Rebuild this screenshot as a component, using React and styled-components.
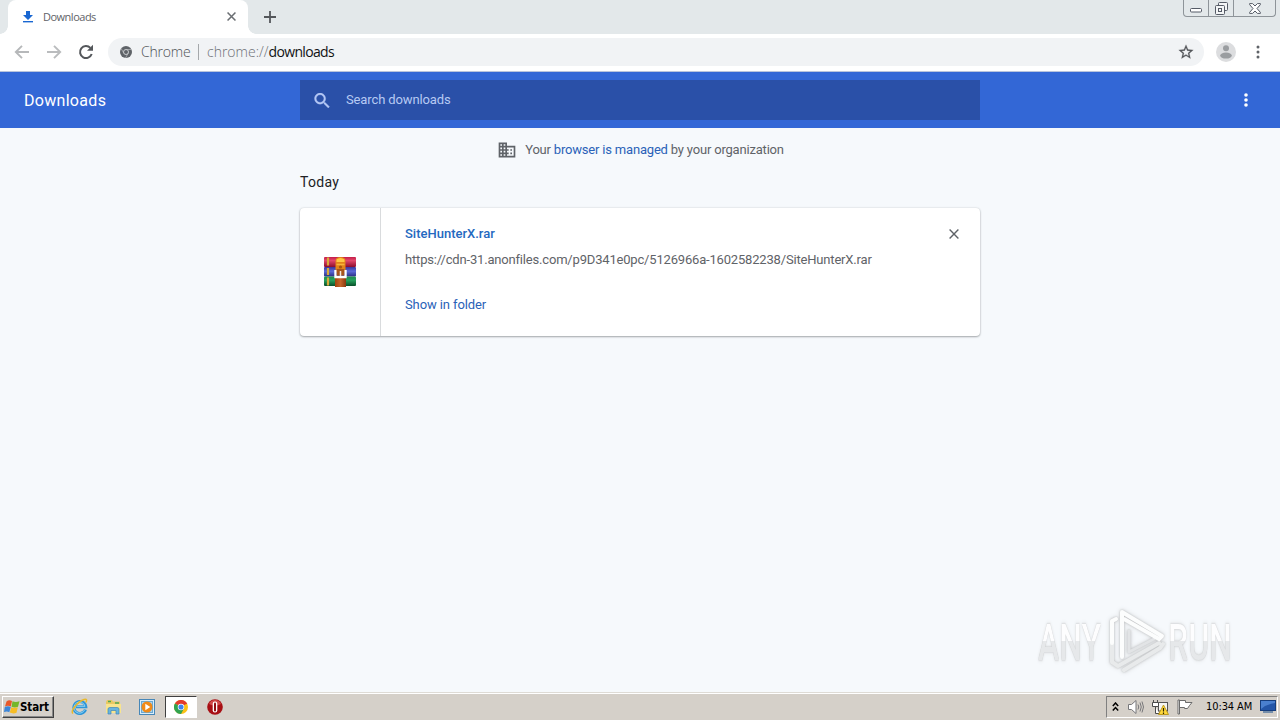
import React from 'react'
import styled, { createGlobalStyle } from 'styled-components'

const trayIcons = [ChevronsIcon, SpeakerIcon, NetworkIcon, FlagIcon]

export default function App() {
    return (
        <Screen>
            <GlobalStyle />
            <TabStrip>
                <Tab>
                    <DownloadIcon />
                    <TabTitle>Downloads</TabTitle>
                    <CrossIcon size={9} width={1.7} color="#6a6e72" />
                </Tab>
                <NewTab><PlusIcon /></NewTab>
                <WindowButtons>
                    <WindowButton $width={24}><MinimizeIcon /></WindowButton>
                    <WindowButton $width={25}><RestoreIcon /></WindowButton>
                    <WindowButton $width={42}><CloseIcon /></WindowButton>
                </WindowButtons>
            </TabStrip>
            <Toolbar>
                <NavButtons>
                    <ArrowIcon />
                    <ArrowIcon forward />
                    <ReloadIcon />
                </NavButtons>
                <AddressBar>
                    <ChromeMark />
                    <SiteName>Chrome</SiteName>
                    <Separator />
                    <Url>chrome://<b>downloads</b></Url>
                    <StarIcon />
                </AddressBar>
                <Avatar />
                <DotsIcon color="#5f6368" radius={1.5} gap={5} />
            </Toolbar>
            <Header>
                <HeaderTitle>Downloads</HeaderTitle>
                <SearchBox>
                    <SearchIcon />
                    <SearchText>Search downloads</SearchText>
                </SearchBox>
                <HeaderMenu><DotsIcon color="#fff" radius={1.8} gap={5} /></HeaderMenu>
            </Header>
            <Content>
                <ManagedNotice>
                    <BuildingIcon />
                    <ManagedText>Your <a>browser is managed</a> by your organization</ManagedText>
                </ManagedNotice>
                <DateHeading>Today</DateHeading>
                <Card>
                    <FileIcon><RarIcon /></FileIcon>
                    <Details>
                        <FileName>SiteHunterX.rar</FileName>
                        <FileUrl>https://cdn-31.anonfiles.com/p9D341e0pc/5126966a-1602582238/SiteHunterX.rar</FileUrl>
                        <ShowLink>Show in folder</ShowLink>
                    </Details>
                    <RemoveButton><CrossIcon size={10} width={1.4} color="#5f6368" /></RemoveButton>
                </Card>
                <Watermark>
                    <WatermarkWord>ANY</WatermarkWord>
                    <PlayMark />
                    <WatermarkWord>RUN</WatermarkWord>
                </Watermark>
            </Content>
            <Taskbar>
                <StartButton><WindowsFlag />Start</StartButton>
                <TaskItem $left={9}><ExplorerIcon /></TaskItem>
                <TaskItem><FolderIcon /></TaskItem>
                <TaskItem><PlayerIcon /></TaskItem>
                <TaskItem $active><ChromeIcon /></TaskItem>
                <TaskItem><OperaIcon /></TaskItem>
                <Tray>
                    {trayIcons.map((Icon, i) => <Icon key={i} />)}
                    <Clock>10:34 AM</Clock>
                    <DesktopIcon />
                </Tray>
            </Taskbar>
        </Screen>
    )
}

// browser icons

function DownloadIcon() {
    return (
        <svg width="12" height="13" viewBox="0 0 12 13" fill="#1967d2">
            <path d="M4 1h4v4h3L6 10 1 5h3z" />
            <path d="M1 11h10v1.4H1z" />
        </svg>
    )
}

function CrossIcon({ size, width, color }) {
    return (
        <svg width={size} height={size} viewBox="0 0 10 10" stroke={color} strokeWidth={width}>
            <path d="M.6.6l8.8 8.8M9.4.6L.6 9.4" />
        </svg>
    )
}

function PlusIcon() {
    return (
        <svg width="12" height="12" viewBox="0 0 12 12" stroke="#54575b" strokeWidth="1.8">
            <path d="M6 0v12M0 6h12" />
        </svg>
    )
}

function MinimizeIcon() {
    return (
        <svg width="12" height="5" viewBox="0 0 12 5" fill="#fff" stroke="#555b66">
            <rect x=".5" y=".5" width="11" height="3.5" rx="1" />
        </svg>
    )
}

function RestoreIcon() {
    return (
        <svg width="13" height="13" viewBox="0 0 13 13" fill="#f3f5f6" stroke="#555b66">
            <rect x="3.5" y=".5" width="9" height="8" rx="1" />
            <rect x=".5" y="3.5" width="9" height="9" rx="1" />
            <rect x="3.5" y="6.5" width="3" height="3" />
        </svg>
    )
}

function CloseIcon() {
    return (
        <svg width="12" height="11" viewBox="0 0 12 11" fill="#fff" stroke="#555b66" strokeLinejoin="round">
            <path d="M.6.6h3L6 3l2.4-2.4h3v1L8 5.5l3.4 3.9v1h-3L6 8l-2.4 2.4h-3v-1L4 5.5.6 1.6z" />
        </svg>
    )
}

function ArrowIcon({ forward }) {
    return (
        <svg width="16" height="14" viewBox="0 0 16 14" fill="none" stroke={forward ? '#babcbe' : '#b6b8ba'} strokeWidth="1.9">
            <path d={forward ? 'M1 7h13M8 .8L14.2 7 8 13.2' : 'M15 7H2M8 .8L1.8 7 8 13.2'} />
        </svg>
    )
}

function ReloadIcon() {
    return (
        <svg width="16" height="16" viewBox="0 0 16 16">
            <path d="M13.7 10A6 6 0 1 1 12.4 3.9" fill="none" stroke="#54575b" strokeWidth="2" />
            <path d="M15 .8v6H9z" fill="#54575b" />
        </svg>
    )
}

function ChromeMark() {
    return (
        <svg width="12" height="12" viewBox="0 0 24 24">
            <circle cx="12" cy="12" r="12" fill="#5f6368" />
            <circle cx="12" cy="12" r="5" fill="none" stroke="#d5d7d9" strokeWidth="1.8" />
            <path d="M12 7h11M7.7 14.5L2.2 5M16.3 14.5L11 24" stroke="#c3c5c8" strokeWidth="1.3" />
        </svg>
    )
}

function StarIcon() {
    return (
        <svg width="16" height="16" viewBox="1 1 22 22" fill="#54575b" stroke="#54575b" strokeWidth=".3">
            <path d="M22 9.24l-7.19-.62L12 2 9.19 8.63 2 9.24l5.46 4.73L5.82 21 12 17.27 18.18 21l-1.63-7.03L22 9.24zM12 15.4l-3.76 2.27 1-4.28-3.32-2.88 4.38-.38L12 6.1l1.71 4.04 4.38.38-3.32 2.88 1 4.28L12 15.4z" />
        </svg>
    )
}

function Avatar() {
    return (
        <svg width="20" height="20" viewBox="0 0 20 20">
            <circle cx="10" cy="10" r="10" fill="#dcdddf" />
            <circle cx="10" cy="6.3" r="3" fill="#9a9da0" />
            <ellipse cx="10" cy="13.6" rx="5.8" ry="3" fill="#9a9da0" />
        </svg>
    )
}

function DotsIcon({ color, radius, gap }) {
    return (
        <svg width="4" height="14" viewBox="0 0 4 14" fill={color}>
            {[7 - gap, 7, 7 + gap].map((y) => <circle key={y} cx="2" cy={y} r={radius} />)}
        </svg>
    )
}

function SearchIcon() {
    return (
        <svg width="16" height="15" viewBox="2.500 3 18.500 17.500" fill="#b4c8f5" stroke="#b4c8f5" strokeWidth=".4">
            <path d="M15.5 14h-.79l-.28-.27C15.41 12.59 16 11.11 16 9.5 16 5.91 13.09 3 9.5 3S3 5.91 3 9.5 5.91 16 9.5 16c1.61 0 3.09-.59 4.23-1.57l.27.28v.79l5 4.99L20.49 19l-4.99-5zm-6 0C7.01 14 5 11.99 5 9.5S7.01 5 9.5 5 14 7.01 14 9.5 11.99 14 9.5 14z" />
        </svg>
    )
}

function BuildingIcon() {
    return (
        <svg width="20" height="20" viewBox="0 0 24 24" fill="#5f6368">
            <path d="M12 7V3H2v18h20V7H12zM6 19H4v-2h2v2zm0-4H4v-2h2v2zm0-4H4V9h2v2zm0-4H4V5h2v2zm4 12H8v-2h2v2zm0-4H8v-2h2v2zm0-4H8V9h2v2zm0-4H8V5h2v2zm10 12h-8v-2h2v-2h-2v-2h2v-2h-2V9h8v10zm-2-8h-2v2h2v-2zm0 4h-2v2h2v-2z" />
        </svg>
    )
}

// three stacked books held by a belt
function RarIcon() {
    return (
        <svg width="32" height="31" viewBox="0 0 32 31">
            <defs>
                <linearGradient id="red" x2="0" y2="1">
                    <stop stopColor="#c41c48" /><stop offset=".35" stopColor="#e2486b" /><stop offset="1" stopColor="#8c0c2c" />
                </linearGradient>
                <linearGradient id="blue" x2="0" y2="1">
                    <stop stopColor="#39379a" /><stop offset=".45" stopColor="#5a6ad8" /><stop offset="1" stopColor="#2b2e83" />
                </linearGradient>
                <linearGradient id="green" x2="0" y2="1">
                    <stop stopColor="#1c8a4e" /><stop offset=".4" stopColor="#26a05c" /><stop offset="1" stopColor="#09502a" />
                </linearGradient>
                <linearGradient id="belt">
                    <stop stopColor="#a3430f" /><stop offset=".5" stopColor="#c5652a" /><stop offset="1" stopColor="#8a3a10" />
                </linearGradient>
            </defs>
            <rect x="0" y="1" width="32" height="10" rx="1" fill="url(#red)" />
            <rect x="0" y="11" width="32" height="9.5" rx="1" fill="url(#blue)" />
            <rect x="0" y="20.5" width="32" height="9.5" rx="1" fill="url(#green)" />
            <path d="M4 1.5v8M4 12v7M4 21.5v8" stroke="#d9a93a" strokeWidth="2.2" />
            <rect x="11" y="21" width="11" height="10" fill="url(#belt)" />
            <path d="M11.5 16V5q0-4 5-4t5 4v11z" fill="#e2841a" />
            <path d="M12.5 3.500q4-3 8 0V6h-8z" fill="#ffc843" />
            <path d="M12.5 8.500h8" stroke="#f7b53a" strokeWidth="1.500" />
            <circle cx="16.500" cy="11" r="1.600" fill="#a6560e" />
            <path d="M11.500 14v7h10v-7" fill="none" stroke="#fff" strokeWidth="2.400" />
            <path d="M12.700 13h7.600v6.500h-7.600z" fill="#a8551b" />
            <path d="M16.500 15v5" stroke="#f3e6da" strokeWidth="1.500" />
        </svg>
    )
}

function PlayMark() {
    return (
        <MarkSvg width="64" height="68" viewBox="0 0 64 68" fill="none" strokeLinejoin="round" strokeLinecap="round">
            <path d="M25 24v21M25 45l25-13" stroke="#e2e4e6" strokeWidth="3" />
            <path d="M8 34v21l6 4 41-23M20 63l36-22 3-4" stroke="#e8eaeb" strokeWidth="4" />
            <path d="M12 12l-4 2v22M18 50V5l40 24-3 3L20 12" stroke="#fcfdfd" strokeWidth="4" />
        </MarkSvg>
    )
}

// taskbar icons

function WindowsFlag() {
    return (
        <svg width="16" height="15" viewBox="0 0 16 15">
            <path d="M2.5 2.5Q5 .5 8 2L6.800 7.500Q4 6 1 7.500z" fill="#e8592b" />
            <path d="M8.500 2.200q3 1.500 7 0L14 7.800q-3 1.200-6.500 0z" fill="#74b72b" />
            <path d="M.8 8Q4 6.500 6.800 8L5.300 13.200Q3 11.700 0 13z" fill="#3d86d8" />
            <path d="M7.300 8.200q3 1.300 6.500 0L12.500 13.700q-3 1.400-6.700-.1z" fill="#f7bd25" />
        </svg>
    )
}

function ExplorerIcon() {
    return (
        <svg width="17" height="17" viewBox="0 0 17 17" fill="none">
            <path d="M14.5 11.5A6 6 0 1 1 14.8 8.8H5" stroke="#2f96d8" strokeWidth="3" />
            <path d="M13.8 11.5A5.6 5.6 0 1 1 14 8.3H5.5" stroke="#8ad2f5" />
            <path d="M2 15.5C-1 13 7 3.5 13 1.5c3-1 3 .8 1.800 3" stroke="#e9b92c" strokeWidth="1.5" />
        </svg>
    )
}

function FolderIcon() {
    return (
        <svg width="17" height="16" viewBox="0 0 17 16">
            <path d="M1 3l1-2h5l1 1.5h7V14H1z" fill="#e9c862" />
            <path d="M3 2.5h3M10 4h4" stroke="#4fa754" strokeWidth="1.3" />
            <path d="M1 5h15v9H1z" fill="#f8e48e" />
            <path d="M3 15V10q0-1.500 2-1.500h7q2 0 2 1.500v5h-3v-3.500H6V15z" fill="#68b4df" stroke="#4088b8" strokeWidth=".7" />
        </svg>
    )
}

function PlayerIcon() {
    return (
        <svg width="16" height="16" viewBox="0 0 16 16">
            <rect x=".5" y=".5" width="15" height="15" fill="#d9edfa" stroke="#4787b8" />
            <rect x="2.5" y="2.5" width="11" height="11" fill="#a8d2ee" stroke="#6aa8d2" />
            <circle cx="8" cy="8" r="5.5" fill="#f08a18" />
            <path d="M6.3 4.8v6.4L11.3 8z" fill="#fff" />
        </svg>
    )
}

function ChromeIcon() {
    return (
        <svg width="14" height="14" viewBox="0 0 24 24">
            <circle cx="12" cy="12" r="12" fill="#fbc116" />
            <path d="M12 12L1.6 6A12 12 0 0 1 22.4 6z" fill="#e33b2e" />
            <path d="M12 6.5h10.7L22.4 6 12 0z" fill="#e33b2e" />
            <path d="M1.6 6A12 12 0 0 0 12 24l4.8-9.2L12 12z" fill="#31a350" />
            <circle cx="12" cy="12" r="5.6" fill="#fff" />
            <circle cx="12" cy="12" r="4.4" fill="#3f83ee" />
        </svg>
    )
}

function OperaIcon() {
    return (
        <svg width="16" height="16" viewBox="0 0 16 16">
            <circle cx="8" cy="8" r="7.8" fill="#a80f14" />
            <path d="M2 5a6.5 6.5 0 0 1 12 0Q8 8 2 5z" fill="#d04a4a" />
            <rect x="5.700" y="2.500" width="4.600" height="11" rx="2.200" fill="#fff" />
            <rect x="7" y="3.500" width="2" height="9" rx="1" fill="#8f0c10" />
        </svg>
    )
}

function ChevronsIcon() {
    return (
        <svg width="7" height="9" viewBox="0 0 7 9" fill="none" stroke="#000" strokeWidth="1.5">
            <path d="M.8 4l2.7-3 2.7 3M.8 8.5l2.7-3 2.7 3" />
        </svg>
    )
}

function SpeakerIcon() {
    return (
        <svg width="17" height="16" viewBox="0 0 17 16" fill="none" stroke="#77777a">
            <path d="M1.5 5.5h3L9 1.5v13L4.5 10.5h-3z" fill="#fff" />
            <path d="M11 5.5q1.5 2.5 0 5M13 3.5q2.5 4.5 0 9M15 2.5q3 5.5 0 11" />
        </svg>
    )
}

function NetworkIcon() {
    return (
        <svg width="17" height="16" viewBox="0 0 17 16">
            <rect x="6.5" y="3.5" width="9" height="8.5" fill="#f5f5f2" stroke="#555" />
            <path d="M7 14.5h5" stroke="#555" />
            <path d="M.5 3.5h6v4h-6zM3.5 7.5v7H7M1.5 1v2.5M5.5 1v2.5" fill="#fff" stroke="#4c4c4c" />
            <path d="M11.500 6l5 9.500h-10z" fill="#ffd83b" stroke="#b18b08" strokeWidth=".8" />
            <path d="M11.500 9v3.500M11.500 13.500V15" stroke="#2b2200" strokeWidth="1.2" />
        </svg>
    )
}

function FlagIcon() {
    return (
        <svg width="16" height="16" viewBox="0 0 16 16" fill="#fff" stroke="#6b6b6b">
            <path d="M2.5 1.5h6v2h6.5l-2.500 3-2 3h-3v-1h-5z" />
            <path d="M1 1h1.5v14H1z" />
        </svg>
    )
}

function DesktopIcon() {
    return (
        <svg width="16" height="13" viewBox="0 0 16 13">
            <rect x=".5" y=".5" width="15" height="10" fill="#2456a8" stroke="#163e7d" />
            <path d="M1 1h14v2Q7 4 1 9z" fill="#4a80cf" />
            <path d="M3 12h10" stroke="#55799f" strokeWidth="1.5" />
        </svg>
    )
}

const GlobalStyle = createGlobalStyle`
    * {
        box-sizing: border-box;
    }
    body {
        margin: 0;
        overflow: hidden;
    }
    svg {
        display: block;
        flex-shrink: 0;
    }
`
const Screen = styled.div`
    width: 1280px;
    height: 720px;
    display: flex;
    flex-direction: column;
    background: #f6f9fc;
    font-family: Roboto, sans-serif;
    font-size: 13px;
    white-space: nowrap;
`
const TabStrip = styled.div`
    height: 34px;
    padding-left: 8px;
    display: flex;
    background: #e3e8ea;
`
const Tab = styled.div`
    width: 240px;
    padding: 0 12px 1px 14px;
    display: flex;
    align-items: center;
    background: #fff;
    border-radius: 8px 8px 0 0;
    position: relative;
    &::before, &::after{
        content: "";
        width: 8px;
        height: 8px;
        position: absolute;
        bottom: 0;
    }
    &::before{
        left: -8px;
        background: radial-gradient(circle at 0 0, transparent 7.5px, #fff 8px);
    }
    &::after{
        right: -8px;
        background: radial-gradient(circle at 100% 0, transparent 7.5px, #fff 8px);
    }
`
const TabTitle = styled.span`
    flex: 1;
    margin-left: 9px;
    font-family: "Open Sans", sans-serif;
    font-size: 11px;
    letter-spacing: -0.5px;
    color: #5f6368;
`
const NewTab = styled.div`
    width: 44px;
    display: flex;
    align-items: center;
    justify-content: center;
`
const WindowButtons = styled.div`
    height: 17px;
    margin: 0 4px 0 auto;
    display: flex;
    border: 1px solid #8e9499;
    border-top: none;
    border-radius: 0 0 4px 4px;
`
const WindowButton = styled.div`
    width: ${(props) => props.$width}px;
    display: flex;
    align-items: center;
    justify-content: center;
    &:first-child{
        align-items: flex-end;
        padding-bottom: 3px;
    }
    & + &{
        border-left: 1px solid #8e9499;
    }
`
const Toolbar = styled.div`
    height: 38px;
    padding: 0 20px 2px 14px;
    display: flex;
    align-items: center;
    background: #fff;
    border-bottom: 1px solid #b9c4dc;
`
const NavButtons = styled.div`
    display: flex;
    align-items: center;
    gap: 16px;
    width: 94px;
`
const AddressBar = styled.div`
    width: 1096px;
    height: 28px;
    padding: 0 10px 0 12px;
    margin-right: 12px;
    display: flex;
    align-items: center;
    background: #f1f3f5;
    border-radius: 14px;
    font-family: "Open Sans", sans-serif;
    font-size: 14px;
    & > svg:last-child{
        margin-left: auto;
    }
    & ~ svg:last-child{
        margin-left: auto;
    }
`
const SiteName = styled.span`
    margin-left: 9px;
    width: 49px;
    color: #4e5256;
    font-weight: 300;
    letter-spacing: -0.2px;
`
const Separator = styled.span`
    width: 1px;
    height: 16px;
    margin: 0 8px;
    background: #a5a8ab;
`
const Url = styled.span`
    color: #6d7175;
    font-weight: 300;
    b{
        color: #101214;
        font-weight: 400;
        letter-spacing: -0.65px;
    }
`
const Header = styled.div`
    height: 56px;
    display: flex;
    align-items: center;
    background: #3367d6;
    color: #fff;
`
const HeaderTitle = styled.div`
    width: 300px;
    padding: 1px 0 0 24px;
    font-size: 16px;
    letter-spacing: 0.3px;
`
const SearchBox = styled.div`
    width: 680px;
    height: 40px;
    padding-left: 14px;
    display: flex;
    align-items: center;
    background: #2a50a8;
`
const SearchText = styled.span`
    margin: 0 0 2px 16px;
    letter-spacing: -0.12px;
    color: #b7caf3;
`
const HeaderMenu = styled.div`
    margin: 0 32px 0 auto;
`
const Content = styled.main`
    flex: 1;
    width: 680px;
    margin: 0 auto;
    position: relative;
`
const ManagedNotice = styled.div`
    height: 44px;
    padding-left: 1px;
    display: flex;
    align-items: center;
    justify-content: center;
    gap: 8px;
    color: #5f6368;
`
const ManagedText = styled.span`
    margin-bottom: 2px;
    letter-spacing: -0.19px;
    a{
        color: #2a62b8;
    }
`
const DateHeading = styled.div`
    height: 36px;
    padding-top: 2px;
    font-size: 14px;
    letter-spacing: 0.3px;
    color: #202124;
`
const Card = styled.div`
    height: 128px;
    display: flex;
    background: #fff;
    border-radius: 4px;
    box-shadow: 0 1px 2px rgba(60, 64, 67, 0.4), 0 0 2px rgba(60, 64, 67, 0.2);
`
const FileIcon = styled.div`
    width: 81px;
    padding-bottom: 1px;
    display: flex;
    align-items: center;
    justify-content: center;
    border-right: 1px solid #d9dbdd;
`
const Details = styled.div`
    flex: 1;
    padding: 16px 0 0 24px;
    line-height: 20px;
`
const FileName = styled.div`
    font-weight: 500;
    color: #2469c0;
`
const FileUrl = styled.div`
    margin-top: 6px;
    letter-spacing: -0.18px;
    color: #5f6368;
`
const ShowLink = styled.div`
    margin-top: 25px;
    letter-spacing: -0.1px;
    color: #2a62b8;
`
const RemoveButton = styled.div`
    padding: 21px 21px 0 0;
`
// floats over the lower right corner of the page
const Watermark = styled.div`
    position: absolute;
    left: 738px;
    top: 479px;
    height: 68px;
    display: flex;
    align-items: center;
`
const WatermarkWord = styled.span`
    width: 104px;
    margin-right: -38px;
    padding-top: 3px;
    font-size: 50px;
    font-weight: 500;
    line-height: 60px;
    color: transparent;
    background: linear-gradient(#fdfdfe 50%, #e6e8ea 50%);
    background-clip: text;
    filter: drop-shadow(0 0 1px #c2c4c6) drop-shadow(0 0 2px #e2e4e6);
    transform: scaleX(0.64);
    transform-origin: left;
`
const MarkSvg = styled.svg`
    filter: drop-shadow(0 0 1px #bbbdbf) drop-shadow(0 0 2px #dcdee0);
`
const Taskbar = styled.div`
    height: 28px;
    padding: 2px;
    display: flex;
    align-items: center;
    background: #d5d0c9;
    border-top: 1px solid #dedbd5;
    box-shadow: inset 0 1px #fff;
`
const StartButton = styled.div`
    width: 52px;
    height: 22px;
    padding-left: 1px;
    display: flex;
    align-items: center;
    border: 1px solid;
    border-color: #fff #404040 #404040 #fff;
    box-shadow: inset -1px -1px #888;
    font-family: "DejaVu Sans Condensed", "DejaVu Sans", sans-serif;
    font-weight: bold;
    font-stretch: condensed;
    font-size: 11.5px;
    letter-spacing: -0.1px;
    color: #000;
`
const TaskItem = styled.div`
    width: 32px;
    height: 22px;
    margin-left: ${(props) => props.$left || 2}px;
    display: flex;
    align-items: center;
    justify-content: center;
    background: ${(props) => props.$active ? '#fff' : 'none'};
    border: 1px solid;
    border-color: ${(props) => props.$active ? '#404040 #fff #fff #404040' : 'transparent'};
`
const Tray = styled.div`
    width: 172px;
    height: 22px;
    margin-left: auto;
    padding: 0 1px 0 5px;
    display: flex;
    align-items: center;
    gap: 8px;
    border: 1px solid;
    border-color: #808080 #fff #fff #808080;
`
const Clock = styled.span`
    width: 47px;
    margin: 0 -1px 0 5px;
    font-family: "DejaVu Sans Condensed", "DejaVu Sans", sans-serif;
    font-stretch: condensed;
    font-size: 11px;
    letter-spacing: -0.1px;
    color: #000;
`
